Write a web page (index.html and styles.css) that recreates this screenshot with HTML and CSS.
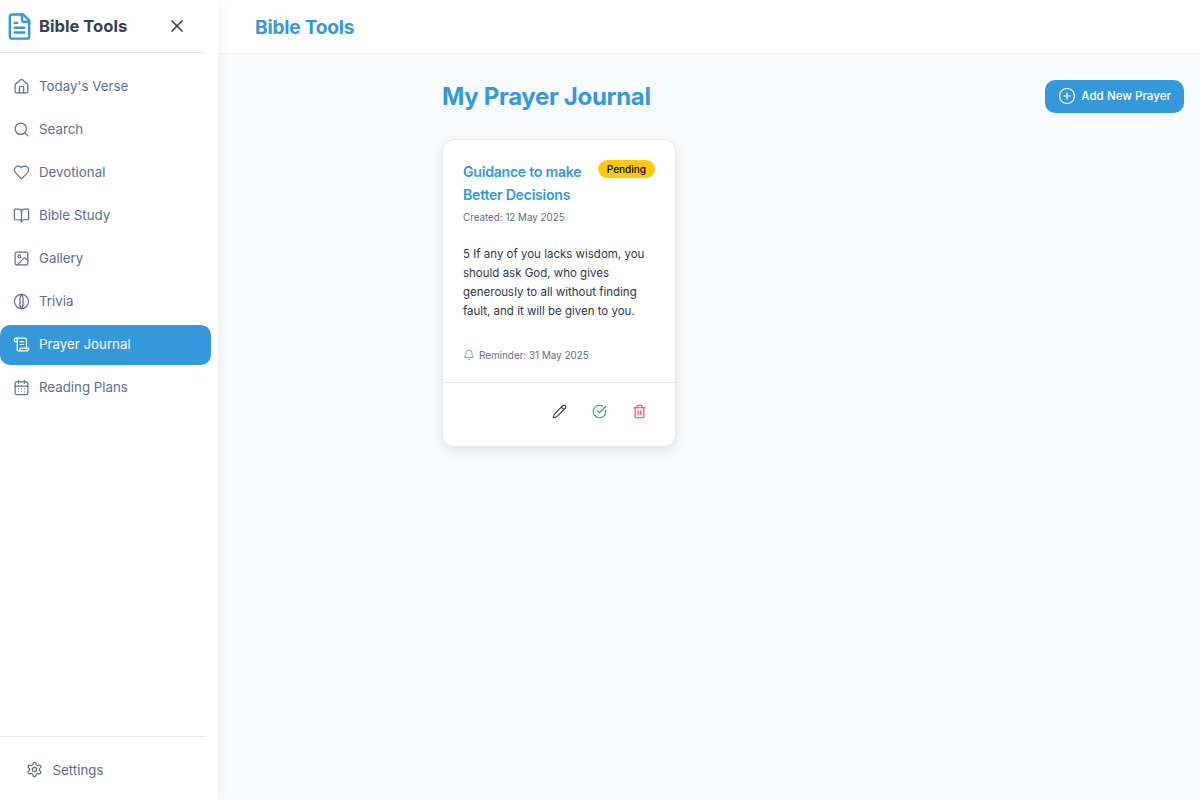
FILE: index.html

```html
<!DOCTYPE html>
<html lang="en">
<head>
  <meta charset="UTF-8">
  <title>Bible Tools - Prayer Journal</title>
  <link rel="stylesheet" href="styles.css">
</head>
<body>
  <aside class="sidebar">
    <div class="brand">
      <svg class="brand-icon" viewBox="0 0 24 24" fill="none" stroke="currentColor" stroke-width="2" stroke-linecap="round" stroke-linejoin="round"><path d="M15 2H6a2 2 0 0 0-2 2v16a2 2 0 0 0 2 2h12a2 2 0 0 0 2-2V7Z"/><path d="M14 2v4a2 2 0 0 0 2 2h4"/><path d="M10 9H8"/><path d="M16 13H8"/><path d="M16 17H8"/></svg>
      <span class="brand-name">Bible Tools</span>
      <svg class="close-icon" viewBox="0 0 24 24" fill="none" stroke="currentColor" stroke-width="2" stroke-linecap="round" stroke-linejoin="round"><path d="M18 6 6 18"/><path d="m6 6 12 12"/></svg>
    </div>
    <nav class="nav">
      <a class="nav-item"><svg class="nav-icon" viewBox="0 0 24 24"><path d="M15 21v-8a1 1 0 0 0-1-1h-4a1 1 0 0 0-1 1v8"/><path d="M3 10a2 2 0 0 1 .71-1.53l7-6a2 2 0 0 1 2.58 0l7 6A2 2 0 0 1 21 10v9a2 2 0 0 1-2 2H5a2 2 0 0 1-2-2z"/></svg>Today's Verse</a>
      <a class="nav-item"><svg class="nav-icon" viewBox="0 0 24 24"><circle cx="11" cy="11" r="8"/><path d="m21 21-4.3-4.3"/></svg>Search</a>
      <a class="nav-item"><svg class="nav-icon" viewBox="0 0 24 24"><path d="M19 14c1.49-1.46 3-3.21 3-5.5A5.5 5.5 0 0 0 16.5 3c-1.76 0-3 .5-4.5 2-1.5-1.5-2.74-2-4.5-2A5.5 5.5 0 0 0 2 8.5c0 2.3 1.5 4.05 3 5.5l7 7Z"/></svg>Devotional</a>
      <a class="nav-item"><svg class="nav-icon" viewBox="0 0 24 24"><path d="M12 7v14"/><path d="M3 18a1 1 0 0 1-1-1V4a1 1 0 0 1 1-1h5a4 4 0 0 1 4 4 4 4 0 0 1 4-4h5a1 1 0 0 1 1 1v13a1 1 0 0 1-1 1h-6a3 3 0 0 0-3 3 3 3 0 0 0-3-3z"/></svg>Bible Study</a>
      <a class="nav-item"><svg class="nav-icon" viewBox="0 0 24 24"><rect width="18" height="18" x="3" y="3" rx="2"/><circle cx="9" cy="9" r="2"/><path d="m21 15-3.09-3.09a2 2 0 0 0-2.82 0L6 21"/></svg>Gallery</a>
      <a class="nav-item"><svg class="nav-icon" viewBox="0 0 24 24"><circle cx="12" cy="12" r="10"/><path d="M12 2a7 10 0 0 0-2 10 7 10 0 0 0 2 10"/><path d="M12 2a7 10 0 0 1 2 10 7 10 0 0 1-2 10"/></svg>Trivia</a>
      <a class="nav-item active"><svg class="nav-icon" viewBox="0 0 24 24"><path d="M15 12h-5"/><path d="M15 8h-5"/><path d="M19 17V5a2 2 0 0 0-2-2H4"/><path d="M8 21h12a2 2 0 0 0 2-2v-1a1 1 0 0 0-1-1H11a1 1 0 0 0-1 1v1a2 2 0 1 1-4 0V5a2 2 0 1 0-4 0v2a1 1 0 0 0 1 1h3"/></svg>Prayer Journal</a>
      <a class="nav-item"><svg class="nav-icon" viewBox="0 0 24 24"><path d="M8 2v4"/><path d="M16 2v4"/><rect width="18" height="18" x="3" y="4" rx="2"/><path d="M3 10h18"/><path d="M8 14h.01"/><path d="M12 14h.01"/><path d="M16 14h.01"/><path d="M8 18h.01"/><path d="M12 18h.01"/><path d="M16 18h.01"/></svg>Reading Plans</a>
    </nav>
    <div class="sidebar-foot">
      <a class="nav-item settings"><svg class="nav-icon" viewBox="0 0 24 24"><path d="M12.22 2h-.44a2 2 0 0 0-2 2v.18a2 2 0 0 1-1 1.73l-.43.25a2 2 0 0 1-2 0l-.15-.08a2 2 0 0 0-2.73.73l-.22.38a2 2 0 0 0 .73 2.73l.15.1a2 2 0 0 1 1 1.72v.51a2 2 0 0 1-1 1.74l-.15.09a2 2 0 0 0-.73 2.73l.22.38a2 2 0 0 0 2.73.73l.15-.08a2 2 0 0 1 2 0l.43.25a2 2 0 0 1 1 1.73V20a2 2 0 0 0 2 2h.44a2 2 0 0 0 2-2v-.18a2 2 0 0 1 1-1.73l.43-.25a2 2 0 0 1 2 0l.15.08a2 2 0 0 0 2.73-.73l.22-.39a2 2 0 0 0-.73-2.73l-.15-.08a2 2 0 0 1-1-1.74v-.5a2 2 0 0 1 1-1.74l.15-.09a2 2 0 0 0 .73-2.73l-.22-.38a2 2 0 0 0-2.73-.73l-.15.08a2 2 0 0 1-2 0l-.43-.25a2 2 0 0 1-1-1.73V4a2 2 0 0 0-2-2z"/><circle cx="12" cy="12" r="3"/></svg>Settings</a>
    </div>
  </aside>

  <div class="main">
    <header class="topbar">Bible Tools</header>
    <div class="content">
      <div class="page-head">
        <h1>My Prayer Journal</h1>
        <button class="add-btn"><svg class="add-icon" viewBox="0 0 24 24" fill="none" stroke="currentColor" stroke-width="2" stroke-linecap="round" stroke-linejoin="round"><circle cx="12" cy="12" r="10"/><path d="M8 12h8"/><path d="M12 8v8"/></svg>Add New Prayer</button>
      </div>
      <article class="card">
        <div class="card-body">
          <div class="card-top">
            <h2>Guidance to make Better Decisions</h2>
            <span class="badge">Pending</span>
          </div>
          <p class="created">Created: 12 May 2025</p>
          <p class="verse">5 If any of you lacks wisdom, you should ask God, who gives generously to all without finding fault, and it will be given to you.</p>
          <div class="reminder">
            <svg class="bell" viewBox="0 0 24 24" fill="none" stroke="currentColor" stroke-width="2" stroke-linecap="round" stroke-linejoin="round"><path d="M10.27 21a2 2 0 0 0 3.46 0"/><path d="M3.26 15.33A1 1 0 0 0 4 17h16a1 1 0 0 0 .74-1.67C19.41 13.96 18 12.5 18 8A6 6 0 0 0 6 8c0 4.5-1.41 5.96-2.74 7.33"/></svg>
            Reminder: 31 May 2025
          </div>
        </div>
        <div class="card-actions">
          <svg class="action edit" viewBox="0 0 24 24"><path d="M21.17 6.81a1 1 0 0 0-3.99-3.99L3.84 16.17a2 2 0 0 0-.5.83l-1.32 4.35a.5.5 0 0 0 .62.62l4.35-1.32a2 2 0 0 0 .83-.5z"/><path d="m15 5 4 4"/></svg>
          <svg class="action done" viewBox="0 0 24 24"><path d="M21.8 10A10 10 0 1 1 17 3.34"/><path d="m9 11 3 3L22 4"/></svg>
          <svg class="action remove" viewBox="0 0 24 24"><path d="M3 6h18"/><path d="M19 6v14c0 1-1 2-2 2H7c-1 0-2-1-2-2V6"/><path d="M8 6V4c0-1 1-2 2-2h4c1 0 2 1 2 2v2"/><path d="M10 11v6"/><path d="M14 11v6"/></svg>
        </div>
      </article>
    </div>
  </div>
</body>
</html>
```

FILE: styles.css

```css
* {
  box-sizing: border-box;
}
html, body {
  height: 100%;
}
body {
  margin: 0;
  display: flex;
  height: 800px;
  overflow: hidden;
  font-family: Inter, "Liberation Sans", sans-serif;
  background-color: #f8fafc;
  color: #2d3748;
}
.sidebar {
  width: 218px;
  flex-shrink: 0;
  display: flex;
  flex-direction: column;
  background: #fff;
  box-shadow: 2px 0 10px rgba(0, 0, 0, 0.05);
  z-index: 1;
}
.brand {
  display: flex;
  align-items: center;
  width: 205px;
  height: 53px;
  padding: 0 18px 0 5px;
  border-bottom: 1px solid #e2e8f0;
}
.brand-icon {
  width: 29px;
  height: 29px;
  color: #3498db;
}
.brand-name {
  margin-left: 5px;
  font-size: 16.6px;
  font-weight: 700;
  color: #374151;
}
.close-icon {
  width: 20px;
  height: 20px;
  margin-left: auto;
  color: #374151;
}
.nav {
  flex: 1;
  display: flex;
  flex-direction: column;
  gap: 3px;
  padding-top: 13.5px;
}
.nav-item {
  display: flex;
  align-items: center;
  gap: 9.5px;
  width: 211px;
  height: 40px;
  padding: 0 0 1px 12.5px;
  border-radius: 10px;
  font-size: 13.3px;
  color: #5a6f8f;
}
.nav-icon {
  width: 17px;
  height: 17px;
  flex-shrink: 0;
  fill: none;
  stroke: currentColor;
  stroke-width: 1.7;
  stroke-linecap: round;
  stroke-linejoin: round;
}
.nav-item.active {
  background-color: #3498db;
  color: #fff;
}
.sidebar-foot {
  width: 205px;
  height: 64px;
  border-top: 1px solid #e2e8f0;
  padding-top: 13px;
}
.settings {
  width: auto;
  padding-left: 26px;
}
.main {
  flex: 1;
  min-width: 0;
}
.topbar {
  height: 54px;
  padding: 0 37px;
  display: flex;
  align-items: center;
  background: #fff;
  border-bottom: 1px solid #edf0f4;
  font-size: 19.1px;
  font-weight: 700;
  letter-spacing: -0.2px;
  color: #3498db;
}
.content {
  padding: 26px 16px 0 224px;
}
.page-head {
  display: flex;
  justify-content: space-between;
  align-items: center;
  height: 32px;
  margin-bottom: 27px;
}
.page-head h1 {
  margin: 0;
  font-size: 24px;
  font-weight: 700;
  letter-spacing: -0.32px;
  color: #3498db;
}
.add-btn {
  display: flex;
  align-items: center;
  gap: 5px;
  height: 33px;
  padding: 0 13px;
  border: none;
  border-radius: 10px;
  background-color: #3498db;
  color: #fff;
  font-family: inherit;
  font-size: 11.6px;
  font-weight: 500;
}
.add-icon {
  width: 18px;
  height: 18px;
  stroke-width: 1.6;
}
.card {
  width: 234px;
  height: 308px;
  background: #fff;
  border: 1px solid #e2e8f0;
  border-radius: 12px;
  box-shadow: 0 4px 12px rgba(0, 0, 0, 0.1);
}
.card-body {
  height: 243px;
  padding: 20px 20px 0;
  border-bottom: 1px solid #e2e8f0;
}
.card-top {
  display: flex;
  justify-content: space-between;
  align-items: flex-start;
}
.card-top h2 {
  width: 130px;
  margin: 0;
  font-size: 14.2px;
  line-height: 23px;
  font-weight: 600;
  letter-spacing: -0.3px;
  color: #3498db;
}
.badge {
  height: 18px;
  padding: 0 9px;
  border-radius: 9px;
  background-color: #ffc90e;
  color: #000;
  font-size: 10px;
  font-weight: 500;
  line-height: 18px;
}
.created {
  margin: 4px 0 0;
  font-size: 9.8px;
  line-height: 16px;
  color: #5a6f8f;
}
.verse {
  margin: 19px 0 0;
  font-size: 11.5px;
  line-height: 19px;
  color: #2d3748;
}
.reminder {
  display: flex;
  align-items: center;
  gap: 4px;
  margin-top: 28px;
  font-size: 9.9px;
  color: #5a6f8f;
}
.bell {
  width: 12px;
  height: 12px;
  stroke-width: 1.6;
  color: #3498db;
}
.card-actions {
  display: flex;
  justify-content: flex-end;
  gap: 25px;
  padding: 20.5px 28.5px 0 0;
}
.action {
  width: 15px;
  height: 15px;
  fill: none;
  stroke: currentColor;
  stroke-width: 1.8;
  stroke-linecap: round;
  stroke-linejoin: round;
}
.edit {
  color: #374151;
}
.done {
  color: #22b455;
}
.remove {
  color: #ef4444;
}
```
